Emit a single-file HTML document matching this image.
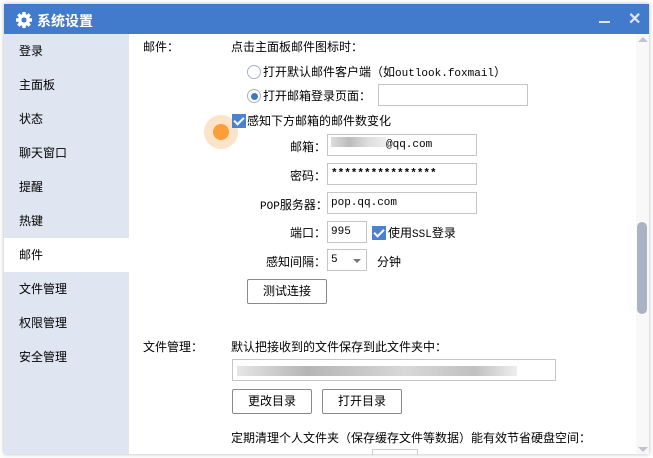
<!DOCTYPE html><html><head><meta charset="utf-8"><style>
*{margin:0;padding:0;box-sizing:border-box}
body{width:653px;height:458px;background:#fff;position:relative;overflow:hidden;font-family:"Liberation Sans","Noto Sans CJK SC",sans-serif;font-size:12px;color:#000}
.a{position:absolute;white-space:nowrap;line-height:14px}
.m{font-family:"Liberation Mono","Noto Sans CJK SC",monospace;font-size:11px}
.win{position:absolute;left:4px;top:4px;width:645px;height:450px;background:#fff;box-shadow:0 0 4px rgba(0,0,0,.3)}
.tb{position:absolute;left:4px;top:4px;width:645px;height:30px;background:#427bcb}
.side{position:absolute;left:4px;top:34px;width:125px;height:420px;background:#dfe6f1}
.sel{position:absolute;left:4px;top:238px;width:125px;height:34px;background:#fff}
.inp{position:absolute;border:1px solid #c5c5c5;background:#fff;height:22px;font-family:"Liberation Mono",monospace;font-size:11px;line-height:20px;padding-left:3px}
.btn{position:absolute;border:1px solid #8a8a8a;border-radius:2px;background:#fff;height:25px;text-align:center;line-height:23px}
.cb{position:absolute;width:14px;height:14px;background:#4a82d0}
.cb:after{content:"";position:absolute;left:4px;top:1px;width:4px;height:8px;border:solid #fff;border-width:0 2px 2px 0;transform:rotate(45deg)}
.rd{position:absolute;width:14px;height:14px;border:1px solid #a9b3c3;border-radius:50%;background:#fff}
</style></head><body>
<div class="win"></div>
<div class="tb"></div>
<svg class="a" style="left:15px;top:11px" width="18" height="18" viewBox="0 0 18 18"><g fill="#fff"><circle cx="9" cy="9" r="6"/><g stroke="#fff" stroke-width="3.4"><line x1="9" y1="1" x2="9" y2="17"/><line x1="1" y1="9" x2="17" y2="9"/><line x1="3.3" y1="3.3" x2="14.7" y2="14.7"/><line x1="14.7" y1="3.3" x2="3.3" y2="14.7"/></g></g><circle cx="9" cy="9" r="2.6" fill="#427bcb"/></svg>
<div class="a" style="left:37px;top:13px;color:#fff;font-size:14px;font-weight:bold;line-height:16px">系统设置</div>
<div class="a" style="left:599px;top:21px;width:11px;height:2px;background:#dfe7f5"></div>
<div class="a" style="left:628px;top:13px;color:#dfe7f5;font-size:16px;font-weight:bold;line-height:14px">✕</div>
<div class="side"></div><div class="sel"></div>
<div class="a" style="left:19px;top:44px">登录</div>
<div class="a" style="left:19px;top:78px">主面板</div>
<div class="a" style="left:19px;top:112px">状态</div>
<div class="a" style="left:19px;top:146px">聊天窗口</div>
<div class="a" style="left:19px;top:180px">提醒</div>
<div class="a" style="left:19px;top:214px">热键</div>
<div class="a" style="left:19px;top:248px">邮件</div>
<div class="a" style="left:19px;top:282px">文件管理</div>
<div class="a" style="left:19px;top:316px">权限管理</div>
<div class="a" style="left:19px;top:350px">安全管理</div>
<div class="a" style="left:143px;top:40px">邮件：</div>
<div class="a" style="left:231px;top:40px">点击主面板邮件图标时：</div>
<div class="rd" style="left:247px;top:65px"></div>
<div class="a" style="left:263px;top:65px">打开默认邮件客户端（如<span class="m">outlook.foxmail</span>）</div>
<div class="rd" style="left:247px;top:89px"></div><div class="a" style="left:251px;top:93px;width:7px;height:7px;border-radius:50%;background:#3d78c8"></div>
<div class="a" style="left:263px;top:89px">打开邮箱登录页面：</div>
<div class="inp" style="left:378px;top:84px;width:150px"></div>
<div class="a" style="left:204px;top:115px;width:34px;height:34px;border-radius:50%;background:#fde3c7"></div>
<div class="a" style="left:213px;top:124px;width:16px;height:16px;border-radius:50%;background:#fd9e38"></div>
<div class="cb" style="left:232px;top:114px"></div>
<div class="a" style="left:247px;top:114px">感知下方邮箱的邮件数变化</div>
<div class="a" style="left:290px;top:140px">邮箱：</div>
<div class="inp" style="left:327px;top:134px;width:150px"><span style="display:inline-block;width:55px;height:10px;background:linear-gradient(90deg,#ddd,#bbb,#ddd,#eee)"></span>@qq.com</div>
<div class="a" style="left:290px;top:169px">密码：</div>
<div class="inp" style="left:327px;top:163px;width:150px;font-weight:bold">****************</div>
<div class="a" style="left:260px;top:198px"><span class="m">POP</span>服务器：</div>
<div class="inp" style="left:327px;top:192px;width:150px">pop.qq.com</div>
<div class="a" style="left:290px;top:226px">端口：</div>
<div class="inp" style="left:327px;top:221px;width:40px">995</div>
<div class="cb" style="left:372px;top:226px"></div>
<div class="a" style="left:388px;top:226px">使用<span class="m">SSL</span>登录</div>
<div class="a" style="left:266px;top:255px">感知间隔：</div>
<div class="inp" style="left:327px;top:249px;width:40px">5</div>
<div class="a" style="left:353px;top:259px;width:0;height:0;border-left:4px solid transparent;border-right:4px solid transparent;border-top:4px solid #777"></div>
<div class="a" style="left:377px;top:255px">分钟</div>
<div class="btn" style="left:247px;top:279px;width:80px">测试连接</div>
<div class="a" style="left:143px;top:340px">文件管理：</div>
<div class="a" style="left:231px;top:340px">默认把接收到的文件保存到此文件夹中：</div>
<div class="inp" style="left:232px;top:359px;width:324px;padding:6px 0 0 4px"><div style="width:280px;height:10px;background:linear-gradient(90deg,#e6e6e6,#b5b5b5 25%,#c8c8c8 45%,#d8d8d8 60%,#c0c0c0 85%,#eee)"></div></div>
<div class="btn" style="left:232px;top:389px;width:80px">更改目录</div>
<div class="btn" style="left:322px;top:389px;width:80px">打开目录</div>
<div class="a" style="left:231px;top:431px">定期清理个人文件夹（保存缓存文件等数据）能有效节省硬盘空间：</div>
<div class="a" style="left:372px;top:449px;width:46px;height:6px;border:1px solid #ccc;border-bottom:none"></div>
<div class="a" style="left:636px;top:34px;width:13px;height:420px;background:#f8f8f8"></div>
<div class="a" style="left:637px;top:222px;width:10px;height:92px;border-radius:5px;background:#aab3c1"></div>
<div class="a" style="left:638px;top:37px;width:0;height:0;border-left:5px solid transparent;border-right:5px solid transparent;border-bottom:5px solid #c0c5cc"></div>
<div class="a" style="left:638px;top:447px;width:0;height:0;border-left:5px solid transparent;border-right:5px solid transparent;border-top:5px solid #c0c5cc"></div>
</body></html>
